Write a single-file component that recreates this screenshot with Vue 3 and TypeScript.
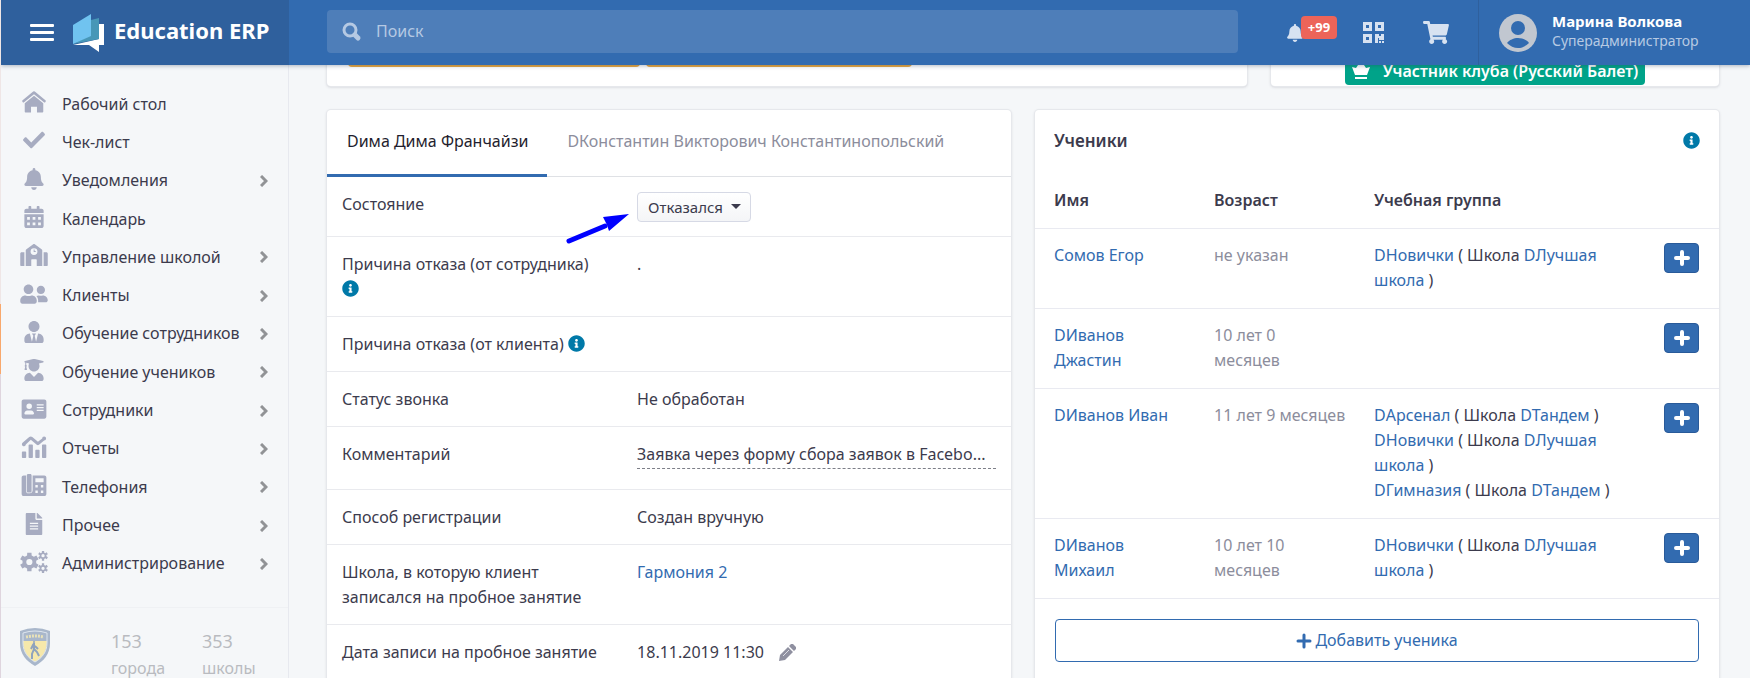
<script setup lang="ts">
import { ref } from 'vue'

interface NavItem { title: string; icon: string; box: string; expandable: boolean }
interface Group { name: string; school: string }
interface Student { name: string; age: string; groups: Group[] }

/** Path of a six-toothed gear with a round hole in its middle. */
function gear(cx: number, cy: number, outer: number, base: number, hole: number): string {
  const points: string[] = []
  for (let tooth = 0; tooth < 6; tooth++) {
    const mid = -90 + tooth * 60
    const corners: [number, number][] = [[-19, base], [-13, outer], [13, outer], [19, base]]
    for (const [turn, radius] of corners) {
      const angle = ((mid + turn) * Math.PI) / 180
      points.push(`${Math.round(cx + radius * Math.cos(angle))} ${Math.round(cy + radius * Math.sin(angle))}`)
    }
  }
  return `M${points.join('L')}ZM${cx} ${cy - hole}a${hole} ${hole} 0 1 0 0 ${2 * hole}a${hole} ${hole} 0 1 0 0 ${-2 * hole}z`
}

const nav: NavItem[] = [
  { title: 'Рабочий стол', expandable: false, box: '-32 -10 576 532', icon: 'M236 4a32 32 0 0 1 40 0L532 216c12 10 12 24 4 34l-8 10c-8 10-22 11-32 3L256 66 16 263c-10 8-24 7-32-3l-8-10c-8-10-8-24 4-34zM256 104L32 288v200c0 13 11 24 24 24h128V368h144v144h128c13 0 24-11 24-24V288z' },
  { title: 'Чек-лист', expandable: false, box: '0 0 512 512', icon: 'M173.898 439.404l-166.4-166.4c-9.997-9.997-9.997-26.206 0-36.204l36.203-36.204c9.997-9.998 26.207-9.998 36.204 0L192 312.69 432.095 72.596c9.997-9.997 26.207-9.997 36.204 0l36.203 36.204c9.997 9.997 9.997 26.206 0 36.204l-294.4 294.401c-9.998 9.997-26.207 9.997-36.204-.001z' },
  { title: 'Уведомления', expandable: true, box: '0 0 448 512', icon: 'M224 512c35.32 0 63.97-28.65 63.97-64H160.03c0 35.35 28.65 64 63.97 64zm215.39-149.71c-19.32-20.76-55.47-51.99-55.47-154.29 0-77.7-54.48-139.9-127.94-155.16V32c0-17.67-14.32-32-31.98-32s-31.98 14.33-31.98 32v20.84C118.56 68.1 64.08 130.3 64.08 208c0 102.3-36.15 133.53-55.47 154.29-6 6.45-8.66 14.16-8.61 21.71.11 16.4 12.98 32 32.1 32h383.8c19.12 0 32-15.6 32.1-32 .05-7.55-2.61-15.27-8.61-21.71z' },
  { title: 'Календарь', expandable: false, box: '0 0 448 512', icon: 'M0 464c0 26.500 21.500 48 48 48h352c26.500 0 48-21.500 48-48V192H0zM64 256h64v64H64zM192 256h64v64h-64zM320 256h64v64h-64zM64 384h64v64H64zM192 384h64v64h-64zM320 384h64v64h-64zM400 64h-48V16c0-8.800-7.200-16-16-16h-32c-8.800 0-16 7.200-16 16v48H160V16c0-8.800-7.200-16-16-16h-32c-8.800 0-16 7.200-16 16v48H48C21.500 64 0 85.500 0 112v48h448v-48c0-26.500-21.500-48-48-48z' },
  { title: 'Управление школой', expandable: true, box: '0 0 640 512', icon: 'M0 224v272c0 9 7 16 16 16h80V192H32c-18 0-32 14-32 32zM608 192h-64v320h80c9 0 16-7 16-16V224c0-18-14-32-32-32zM496 121L338 5c-11-7-25-7-36 0L144 121c-10 6-16 16-16 27v364h128V368c0-9 7-16 16-16h96c9 0 16 7 16 16v144h128V148c0-11-6-21-16-27zM320 256a80 80 0 1 1 0-160 80 80 0 0 1 0 160zM312 128v56h48v-20h-26v-36z' },
  { title: 'Клиенты', expandable: true, box: '0 0 640 512', icon: 'M192 256c61.900 0 112-50.100 112-112S253.900 32 192 32 80 82.100 80 144s50.100 112 112 112zm76.800 32h-8.300c-20.800 10-43.900 16-68.500 16s-47.600-6-68.500-16h-8.300C51.600 288 0 339.600 0 403.200V432c0 26.500 21.500 48 48 48h288c26.500 0 48-21.500 48-48v-28.800c0-63.600-51.600-115.200-115.200-115.200zM480 256c53 0 96-43 96-96s-43-96-96-96-96 43-96 96 43 96 96 96zm48 32h-3.800c-13.900 4.800-28.600 8-44.200 8s-30.300-3.200-44.200-8H432c-20.400 0-39.200 5.900-55.700 15.400 24.400 26.300 39.700 61.200 39.700 99.800v38.400c0 2.200-.5 4.300-.6 6.400H592c26.500 0 48-21.500 48-48 0-61.900-50.100-112-112-112z' },
  { title: 'Обучение сотрудников', expandable: true, box: '0 0 448 512', icon: 'M224 256c70.700 0 128-57.300 128-128S294.700 0 224 0 96 57.300 96 128s57.300 128 128 128zm95.800 32.600L272 480l-32-136 32-56h-96l32 56-32 136-47.800-191.400C56.900 292 0 350.300 0 422.400V464c0 26.500 21.500 48 48 48h352c26.500 0 48-21.500 48-48v-41.600c0-72.100-56.900-130.400-128.200-133.800z' },
  { title: 'Обучение учеников', expandable: true, box: '0 0 448 512', icon: 'M319.400 320.600L224 416l-95.400-95.400C57.100 323.700 0 382.200 0 454.400v9.600c0 26.500 21.500 48 48 48h352c26.500 0 48-21.500 48-48v-9.600c0-72.200-57.100-130.700-128.600-133.800zM13.600 79.800l6.400 1.500v58.400c-7 4.200-12 11.500-12 20.300 0 8.400 4.600 15.400 11.100 19.700L3.500 242c-1.700 6.900 2.100 14 7.600 14h41.800c5.500 0 9.300-7.100 7.600-14l-15.600-62.300C51.400 175.400 56 168.400 56 160c0-8.800-5-16.100-12-20.300V87.100l66 15.900c-8.600 17.200-14 36.400-14 57 0 70.700 57.300 128 128 128s128-57.300 128-128c0-20.600-5.300-39.800-14-57l96.300-23.200c18.200-4.400 18.200-27.100 0-31.500l-190.400-46c-13-3.100-26.700-3.100-39.700 0L13.600 48.200c-18.100 4.400-18.100 27.200 0 31.600z' },
  { title: 'Сотрудники', expandable: true, box: '0 0 576 512', icon: 'M48 32C21 32 0 53 0 80v352c0 27 21 48 48 48h480c27 0 48-21 48-48V80c0-27-21-48-48-48zM176 128a64 64 0 1 1 0 128 64 64 0 0 1 0-128zM64 362c0-37 30-74 67-74h90c37 0 67 37 67 74 0 12-10 22-22 22H86c-12 0-22-10-22-22zM352 144h160v32H352zM352 208h160v32H352zM352 272h160v32H352z' },
  { title: 'Отчеты', expandable: true, box: '0 0 576 512', icon: 'M24 360h64c10 0 18 8 18 18v116c0 10-8 18-18 18H24c-10 0-18-8-18-18V378c0-10 8-18 18-18zM180 200h64c10 0 18 8 18 18v276c0 10-8 18-18 18h-64c-10 0-18-8-18-18V218c0-10 8-18 18-18zM336 320h64c10 0 18 8 18 18v156c0 10-8 18-18 18h-64c-10 0-18-8-18-18V338c0-10 8-18 18-18zM492 200h64c10 0 18 8 18 18v276c0 10-8 18-18 18h-64c-10 0-18-8-18-18V218c0-10 8-18 18-18zM28 152L176 26a54 54 0 0 1 72-2l132 110 98-74a46 46 0 1 1 46 44L404 206a46 46 0 0 1-52-4L214 86 98 196a46 46 0 1 1-70-44z' },
  { title: 'Телефония', expandable: true, box: '0 0 576 512', icon: 'M104 32H48C21 32 0 53 0 80v384c0 27 21 48 48 48h480c27 0 48-21 48-48V80c0-27-21-48-48-48H256v352c0 35-29 64-64 64h-40c-27 0-48-21-48-48zM152 0h48c18 0 32 14 32 32v368c0 18-14 32-32 32h-48c-18 0-32-14-32-32V32c0-18 14-32 32-32zM320 96v96h192V96zM320 256h56v56h-56zM448 256h56v56h-56zM320 384h56v56h-56zM448 384h56v56h-56z' },
  { title: 'Прочее', expandable: true, box: '0 0 384 512', icon: 'M224 136V0H24C10.700 0 0 10.700 0 24v464c0 13.300 10.700 24 24 24h336c13.300 0 24-10.700 24-24V160H248c-13.200 0-24-10.800-24-24zM96 224h192v32H96zM96 288h192v32H96zM96 352h192v32H96zM384 121.900v6.100H256V0h6.100c6.400 0 12.500 2.500 17 7l97.900 98c4.500 4.500 7 10.600 7 16.900z' },
  { title: 'Администрирование', expandable: true, box: '0 0 640 512', icon: gear(212, 256, 224, 162, 72) + gear(530, 110, 118, 80, 38) + gear(530, 402, 118, 80, 38) },
]

const bell = nav[2].icon
const cart = 'M528.12 301.319l47.273-208C578.806 78.301 567.391 64 551.99 64H159.208l-9.166-44.81C147.758 8.021 137.93 0 126.529 0H24C10.745 0 0 10.745 0 24v16c0 13.255 10.745 24 24 24h69.883l70.248 343.435C147.325 417.1 136 435.222 136 456c0 30.928 25.072 56 56 56s56-25.072 56-56c0-15.674-6.447-29.835-16.824-40h209.647C430.447 426.165 424 440.326 424 456c0 30.928 25.072 56 56 56s56-25.072 56-56c0-22.172-12.888-41.332-31.579-50.405l5.517-24.276c3.413-15.018-8.002-29.319-23.403-29.319H218.117l-6.545-32h293.145c11.206 0 20.92-7.754 23.403-18.681z'
const info = 'M256 8C119.043 8 8 119.083 8 256c0 136.997 111.043 248 248 248s248-111.003 248-248C504 119.083 392.957 8 256 8zm0 110c23.196 0 42 18.804 42 42s-18.804 42-42 42-42-18.804-42-42 18.804-42 42-42zm56 254c0 6.627-5.373 12-12 12h-88c-6.627 0-12-5.373-12-12v-24c0-6.627 5.373-12 12-12h12v-64h-12c-6.627 0-12-5.373-12-12v-24c0-6.627 5.373-12 12-12h64c6.627 0 12 5.373 12 12v100h12c6.627 0 12 5.373 12 12v24z'
const plus = 'M8 2v12M2 8h12'

const best = 'DЛучшая\nшкола'
const students: Student[] = [
  { name: 'Сомов Егор', age: 'не указан', groups: [{ name: 'DНовички', school: best }] },
  { name: 'DИванов\nДжастин', age: '10 лет 0\nмесяцев', groups: [] },
  {
    name: 'DИванов Иван', age: '11 лет 9 месяцев',
    groups: [
      { name: 'DАрсенал', school: 'DТандем' },
      { name: 'DНовички', school: best },
      { name: 'DГимназия', school: 'DТандем' },
    ],
  },
  { name: 'DИванов\nМихаил', age: '10 лет 10\nмесяцев', groups: [{ name: 'DНовички', school: best }] },
]

const search = ref('')
const state = ref('Отказался')
const tabs = ['Dима Дима Франчайзи', 'DКонстантин Викторович Константинопольский']
const activeTab = ref(0)
</script>

<template>
  <div class="app">
    <header class="header">
      <div class="brand">
        <button class="burger" type="button" aria-label="Меню"><i></i><i></i><i></i></button>
        <a class="logo" href="#">
          <svg width="31" height="38" viewBox="0 0 31 38" aria-hidden="true">
            <path fill="#fff" d="M26 10h5v21h-5v7l-10-7H0l26-6z" />
            <path fill="#4797b7" d="M18 6l8-2v21L0 30l18-9z" />
            <path fill="#70c3f0" d="M0 11L18 0v22L0 30z" />
          </svg>
          <span>Education ERP</span>
        </a>
      </div>
      <label class="search">
        <svg width="20" height="20" viewBox="0 0 20 20" aria-hidden="true">
          <circle cx="8" cy="8" r="6" fill="none" stroke="currentColor" stroke-width="3" />
          <path d="M13 13l3 3" stroke="currentColor" stroke-width="5" stroke-linecap="round" />
        </svg>
        <input v-model="search" type="search" placeholder="Поиск" aria-label="Поиск" />
      </label>
      <div class="tools">
        <button class="tool" type="button" aria-label="Уведомления">
          <svg width="16" height="18" viewBox="0 0 448 512"><path fill="currentColor" :d="bell" /></svg>
          <span class="count">+99</span>
        </button>
        <button class="tool qr" type="button" aria-label="QR-код">
          <svg width="21" height="21" viewBox="0 0 21 21">
            <path fill="currentColor" fill-rule="evenodd" d="M0 0h9v9H0zM3 3v3h3V3zM12 0h9v9h-9zM15 3v3h3V3zM0 12h9v9H0zM3 15v3h3v-3zM12 12h4v2h2v-2h3v6h-5v-2h-1v5h-3zM16 19h2v2h-2zM19 19h2v2h-2z" />
          </svg>
        </button>
        <button class="tool cart" type="button" aria-label="Корзина">
          <svg width="26" height="23" viewBox="0 0 576 512"><path fill="currentColor" :d="cart" /></svg>
        </button>
      </div>
      <a class="user" href="#">
        <svg width="38" height="38" viewBox="0 0 38 38" aria-hidden="true">
          <circle cx="19" cy="19" r="19" fill="#c1c7d0" />
          <circle cx="19" cy="14" r="7" fill="#326bb0" />
          <path d="M8 29c2-3 7-5 11-5s9 2 11 5c-3 3-7 5-11 5s-8-2-11-5z" fill="#326bb0" />
        </svg>
        <span class="who"><b>Марина Волкова</b><small>Суперадминистратор</small></span>
      </a>
    </header>

    <div class="body">
      <aside class="sidebar">
        <nav class="nav">
          <a v-for="item in nav" :key="item.title" href="#">
            <svg class="nav-icon" :viewBox="item.box" aria-hidden="true"><path fill="currentColor" fill-rule="evenodd" :d="item.icon" /></svg>
            <span>{{ item.title }}</span>
            <svg v-if="item.expandable" class="chevron" width="8" height="12" viewBox="0 0 8 12" aria-hidden="true"><path d="M1 1l5 5-5 5" fill="none" stroke="currentColor" stroke-width="3" /></svg>
          </a>
        </nav>
        <div class="stats">
          <svg width="30" height="38" viewBox="0 0 30 38" aria-hidden="true">
            <path fill="#a9b7cb" d="M0 3Q15-3 30 3v12c0 11-6 18-15 23C6 33 0 26 0 15z" />
            <path fill="#f6e8ab" d="M3 13h24c0 11-5 17-12 21C8 30 3 24 3 13z" />
            <path fill="none" stroke="#dde5ee" d="M3 5q12-4 24 0v10c0 9-5 15-12 19C8 30 3 24 3 15z" />
            <path d="M6 9q9-2 18 0" fill="none" stroke="#e9e2b8" stroke-width="3" stroke-dasharray="2 1" />
            <path d="M14 15v6l3 3 2 4M14 21l-2 5v5M11 21l2-4 3 2 2 2" fill="none" stroke="#8fa3bd" stroke-width="2" />
            <circle cx="14" cy="14" r="1" fill="#8fa3bd" />
          </svg>
          <div><b>153</b><span>города</span></div>
          <div><b>353</b><span>школы</span></div>
        </div>
      </aside>

      <main class="main">
        <section class="row top">
          <div class="card bars"><i class="bar"></i><i class="bar narrow"></i></div>
          <div class="card club">
            <span class="badge">
              <svg width="18" height="18" viewBox="0 0 18 18" aria-hidden="true"><path fill="#fff" d="M0 5l4 1 2-3 3-2 3 2 2 3 4-1-3 8H3zM3 15h12v2H3z" /></svg>
              Участник клуба (Русский Балет)
            </span>
          </div>
        </section>

        <section class="row">
          <div class="card">
            <div class="tabs" role="tablist">
              <button v-for="(tab, i) in tabs" :key="tab" type="button" role="tab" :aria-selected="i === activeTab" :class="{ active: i === activeTab }" @click="activeTab = i">{{ tab }}</button>
            </div>
            <table class="details">
              <tbody>
                <tr>
                  <th scope="row"><label for="state">Состояние</label></th>
                  <td>
                    <span class="state">
                      <select id="state" v-model="state"><option>Отказался</option></select>
                      <svg width="10" height="5" viewBox="0 0 10 5" aria-hidden="true"><path d="M0 0h10L5 5z" fill="#3c3b4d" /></svg>
                      <svg class="pointer" width="66" height="32" viewBox="0 0 66 32" aria-hidden="true"><path d="M4 28L40 13" stroke="#00f" stroke-width="5" stroke-linecap="round" /><path d="M38 4l26-3-20 17-2-6z" fill="#00f" /></svg>
                    </span>
                  </td>
                </tr>
                <tr>
                  <th scope="row">Причина отказа (от сотрудника)<br /><svg class="info" viewBox="0 0 512 512"><path :d="info" /></svg></th>
                  <td>.</td>
                </tr>
                <tr>
                  <th scope="row">Причина отказа (от клиента) <svg class="info" viewBox="0 0 512 512"><path :d="info" /></svg></th>
                  <td></td>
                </tr>
                <tr><th scope="row">Статус звонка</th><td>Не обработан</td></tr>
                <tr><th scope="row">Комментарий</th><td><div class="comment">Заявка через форму сбора заявок в Facebo...</div></td></tr>
                <tr><th scope="row">Способ регистрации</th><td>Создан вручную</td></tr>
                <tr><th scope="row">Школа, в которую клиент<br />записался на пробное занятие</th><td><a href="#">Гармония 2</a></td></tr>
                <tr>
                  <th scope="row">Дата записи на пробное занятие</th>
                  <td>
                    <span class="date">18.11.2019 11:30
                      <button type="button" aria-label="Изменить дату">
                        <svg width="17" height="17" viewBox="0 0 17 17"><path fill="#8f90a0" d="M12 0q1-1 2 0l3 3q1 1 0 2l-2 2-5-5zM9 3l5 5-8 8-6 1 1-6z" /><path d="M4 12l6-6" stroke="#dcdce4" /></svg>
                      </button>
                    </span>
                  </td>
                </tr>
              </tbody>
            </table>
          </div>

          <div class="card">
            <div class="card-title">
              <h2>Ученики</h2>
              <svg class="info" viewBox="0 0 512 512"><path :d="info" /></svg>
            </div>
            <table class="students">
              <colgroup><col class="c-name" /><col class="c-age" /><col /><col class="c-add" /></colgroup>
              <thead><tr><th scope="col">Имя</th><th scope="col">Возраст</th><th scope="col">Учебная группа</th><td></td></tr></thead>
              <tbody>
                <tr v-for="s in students" :key="s.name">
                  <td><a href="#">{{ s.name }}</a></td>
                  <td class="age">{{ s.age }}</td>
                  <td><div v-for="g in s.groups" :key="g.name"><a href="#">{{ g.name }}</a> ( Школа <a href="#">{{ g.school }}</a> )</div></td>
                  <td><button class="plus" type="button" aria-label="Добавить группу"><svg width="16" height="16" viewBox="0 0 16 16"><path :d="plus" stroke="currentColor" stroke-width="4" stroke-linecap="round" /></svg></button></td>
                </tr>
              </tbody>
            </table>
            <div class="card-foot">
              <button class="add" type="button"><svg width="16" height="16" viewBox="0 0 16 16" aria-hidden="true"><path :d="plus" stroke="currentColor" stroke-width="3" stroke-linecap="round" /></svg>Добавить ученика</button>
            </div>
          </div>
        </section>
      </main>
    </div>
  </div>
</template>

<style>
body { margin: 0; background: #f5f7f9; overflow: hidden; }
</style>

<style scoped>
* { box-sizing: border-box; }
button, input, select { font: inherit; color: inherit; }
button { cursor: pointer; }
a { color: #326bb0; text-decoration: none; }
svg { flex: none; }

.app {
  height: 100vh; overflow: hidden; display: flex; flex-direction: column;
  border-left: 1px solid; border-image: linear-gradient(#efe6e6 304px, #f8a86c 304px 374px, #dfd5de 374px) 1;
  font: 16px/25px "Noto Sans", "Open Sans", sans-serif; color: #3c3b4d; background: #f5f7f9;
}

.header { display: flex; flex: none; height: 65px; background: #326bb0; color: #fff; position: relative; z-index: 2; box-shadow: 0 1px 4px rgba(40, 60, 90, .35); }
.brand { width: 288px; flex: none; background: #2f609d; display: flex; align-items: center; padding-left: 29px; gap: 19px; }
.burger { border: 0; background: none; padding: 0; width: 24px; display: grid; gap: 4px; }
.burger i { height: 3px; border-radius: 1px; background: #fff; }
.logo { display: flex; align-items: center; gap: 10px; color: #fff; font-size: 22px; font-weight: 700; white-space: nowrap; }
.logo span { padding-bottom: 5px; }
.search { flex: 1; margin: 10px 0 12px 38px; background: #4e7eb9; border-radius: 4px; display: flex; align-items: center; gap: 14px; padding: 0 15px; color: #b5c9e3; }
.search input { flex: 1; min-width: 0; border: 0; outline: 0; background: none; padding: 0; }
.search input::placeholder { color: #b5c9e3; opacity: 1; }
.tools { display: flex; align-items: center; padding: 0 29px 0 49px; color: #d7e2f1; }
.tool { border: 0; background: none; padding: 0; display: flex; align-items: center; }
.count { background: #ec6459; color: #fff; border-radius: 4px; font-size: 13px; font-weight: 700; line-height: 23px; width: 36px; margin: 0 0 10px -2px; text-align: center; z-index: 1; }
.qr { margin-left: 26px; }
.cart { margin-left: 39px; }
.user { width: 272px; flex: none; border-left: 1px solid #2f609d; display: flex; align-items: center; gap: 15px; padding-left: 20px; color: #fff; }
.who { display: grid; line-height: 20px; white-space: nowrap; padding-bottom: 4px; }
.who b { font-size: 15px; font-weight: 700; }
.who small { font-size: 14px; color: #b7cae3; }

.body { flex: 1; min-height: 0; display: flex; }
.sidebar { width: 288px; flex: none; border-right: 1px solid #e7e9ef; padding-top: 20px; }
.nav { display: grid; grid-auto-rows: 1fr; min-height: 498px; padding: 0 20px 0 17px; }
.nav a { display: flex; align-items: center; color: #3c3b4d; white-space: nowrap; }
.nav-icon { width: 32px; height: 22px; margin: 0 12px 4px 0; color: #a7acc1; }
.nav span { flex: 1; }
.chevron { color: #919396; }
.stats { margin-top: 24px; border-top: 1px solid #eff1f4; padding: 20px 0 0 19px; display: flex; color: #b9bbc0; }
.stats div { display: grid; line-height: 27px; flex: none; width: 91px; }
.stats div:last-child { width: auto; }
.stats svg { margin-right: 61px; }
.stats b { font-size: 18px; font-weight: 400; }

.main { flex: 1; min-width: 0; margin-top: -25px; padding: 0 31px 0 38px; display: grid; gap: 24px; align-content: start; }
.row { display: grid; grid-template-columns: minmax(0, 1fr) minmax(0, 1fr); gap: 24px; }
.top { grid-template-columns: minmax(0, 1fr) 448px; }
.card { background: #fff; border-radius: 4px; box-shadow: 0 0 0 1px #e6e8ec, 0 1px 3px rgba(60, 60, 80, .25); }
.bars { display: flex; gap: 6px; padding: 0 21px 19px; height: 46px; }
.bar { width: 292px; background: #eba83f; border-radius: 4px; }
.narrow { width: 266px; }
.club { display: flex; justify-content: center; align-items: end; padding-bottom: 1px; }
.badge { background: #00a389; color: #fff; font-weight: 600; line-height: 28px; border-radius: 4px; display: flex; align-items: center; gap: 13px; padding: 0 7px; white-space: nowrap; }

.tabs { display: flex; border-bottom: 1px solid #dfe1e5; }
.tabs button { height: 67px; margin-bottom: -1px; padding: 0 19px 1px 20px; border: 0; border-bottom: 3px solid transparent; background: none; color: #8c8d9c; white-space: nowrap; }
.tabs .active { color: #1f1e2e; border-color: #326bb0; }

table { width: 100%; border-collapse: collapse; table-layout: fixed; }
.details th, .details td { text-align: left; vertical-align: top; font-weight: 400; padding: 15px 15px 14px; border-bottom: 1px solid #e9eaee; }
.details th { width: 43%; white-space: nowrap; padding-right: 0; }
.details td { padding-left: 16px; }
.details a { display: block; }
.info { width: 17px; height: 17px; fill: #0079a8; vertical-align: -2px; }
.state { position: relative; display: flex; width: max-content; }
.state select { appearance: none; height: 30px; line-height: 20px; font-size: 15px; border: 1px solid #d6d9e5; border-radius: 4px; background: linear-gradient(#fff, #f4f5f7); padding: 0 27px 0 10px; }
.state svg { position: absolute; right: 10px; top: 12px; }
.state .pointer { right: auto; left: -72px; top: 21px; }
.comment { border-bottom: 1px dashed #7d7f88; overflow: hidden; white-space: nowrap; padding-bottom: 1px; margin-bottom: 6px; }
.date { display: flex; align-items: center; gap: 15px; }
.date button { border: 0; background: none; padding: 0; display: flex; }

.card-title { display: flex; align-items: center; justify-content: space-between; padding: 18px 19px; }
h2 { margin: 0; font-size: 17px; font-weight: 600; }
.students th, .students td { text-align: left; vertical-align: top; padding: 14px 0 15px 19px; border-bottom: 1px solid #e9eaf1; white-space: pre-line; }
.students thead th { font-weight: 600; padding: 17px 0 15px 19px; }
.students .age { color: #8c8d9c; }
.c-name, .c-age { width: 23.4%; }
.c-add { width: 74px; }
.plus { width: 35px; height: 30px; border: 1px solid #295a99; border-radius: 4px; background: #326bb0; color: #fff; display: grid; place-items: center; padding: 0; }
.card-foot { padding: 20px; }
.add { width: 100%; height: 43px; border: 1px solid #326bb0; border-radius: 4px; background: #fff; color: #326bb0; display: flex; align-items: center; justify-content: center; gap: 3px; }
</style>
